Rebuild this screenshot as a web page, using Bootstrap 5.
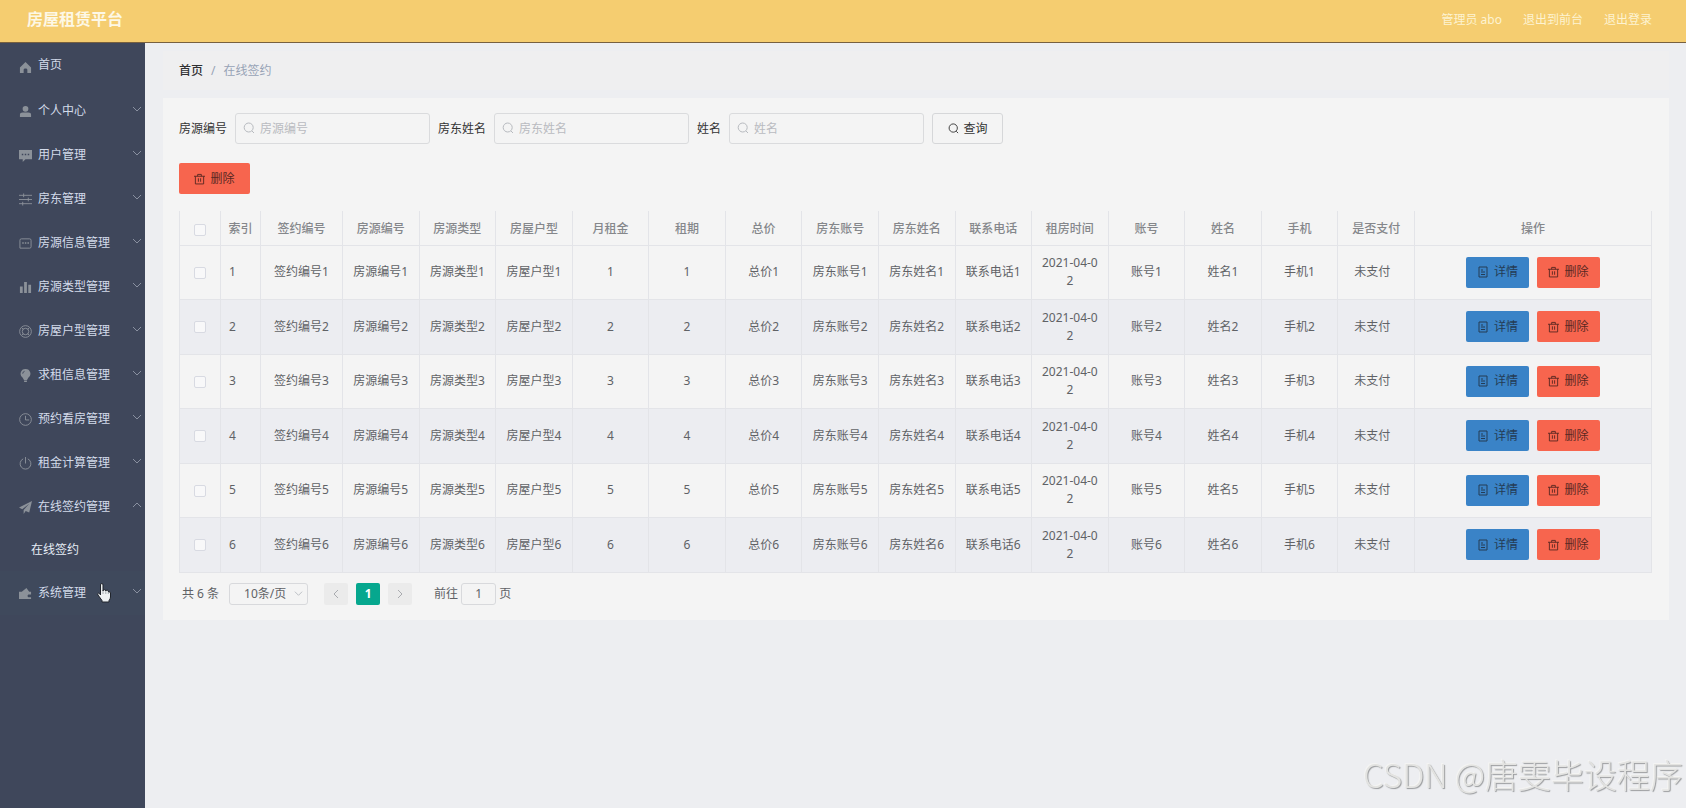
<!DOCTYPE html>
<html lang="zh-CN">
<head>
<meta charset="utf-8">
<meta name="viewport" content="width=device-width, initial-scale=1">
<title>房屋租赁平台</title>
<link href="https://cdn.jsdelivr.net/npm/bootstrap@5.3.0/dist/css/bootstrap.min.css" rel="stylesheet">
<style>
body { font: 12px/18px "Noto Sans", "Noto Sans CJK SC", sans-serif; background: #edeef1; color: #606266; }
svg { display: block; fill: none; stroke: currentColor; flex: none; }
a { text-decoration: none; }
.topbar { height: 43px; background: #f5cd70; border-bottom: 1px solid #77603f; padding: 0 34px 5px 27px; }
.brand { font-size: 16px; font-weight: 700; color: #fdf8e6; }
.toplinks { gap: 21px; padding-top: 2px; }
.toplinks a { color: #fdf3d2; }
.sidebar { width: 145px; background: #3f475b; flex: none; }
.side-link { height: 44px; padding: 0 3px 0 19px; color: #d3dbea; }
.side-link > svg:first-child { color: #8b9199; margin-right: 6px; }
.side-link .chev { color: #8990a0; margin: 0 0 4px auto; }
.side-link.home { height: 46px; padding-bottom: 2px; }
.side-link.hovered { background: #3f495c; }
.side-sub { height: 42px; padding-left: 31px; color: #e6edf6; }
.pointer { left: 97px; top: 12px; }
.content-area { padding: 8px 17px 0 18px; min-width: 0; }
.crumbs { height: 39px; padding: 0 16px; background: #efeff0; gap: 8px; margin-bottom: 8px; }
.crumbs a { color: #303133; font-weight: 500; }
.crumbs span { color: #97a3b6; }
.panel { background: #f4f4f4; padding: 15px 17px 15px 16px; }
.searchbar { gap: 8px; color: #333; margin-bottom: 19px; }
.field { width: 195px; }
.field svg { left: 8px; top: 9px; color: #b7babf; }
.field .form-control { height: 31px; padding: 0 8px 0 24px; font-size: 12px; line-height: 18px; background: transparent; border: 1px solid #dadbdd; border-radius: 3px; }
.field .form-control::placeholder { color: #b9bbc0; }
.act { --bs-btn-padding-x: 12px; --bs-btn-padding-y: 0px; --bs-btn-font-size: 12px; --bs-btn-border-radius: 2px; --bs-btn-line-height: 18px; height: 31px; gap: 5px; }
.act-wide { width: 71px; }
.act-row { width: 63px; padding: 0; }
.act-find { --bs-btn-border-color: #d6d7d9; --bs-btn-color: #333; --bs-btn-border-radius: 3px; }
.act-del { --bs-btn-bg: #f7654e; --bs-btn-color: #5a2822; --bs-btn-hover-bg: #f5573e; }
.act-info { --bs-btn-bg: #3a83c7; --bs-btn-color: #243c55; --bs-btn-hover-bg: #3279bd; }
.grid-table { table-layout: fixed; border-collapse: collapse; width: 100%; margin: 17px 0 10px; text-align: center; }
.grid-table th, .grid-table td { border: 1px solid #e3e4e8; padding: 0 8px; word-break: break-all; vertical-align: middle; }
.grid-table th { height: 34px; padding: 2px 4px 0; border-top: 0; font-weight: 500; color: #85878b; }
.grid-table td { height: 54px; }
.grid-table tbody tr:nth-child(even) { background: #ecedf1; }
.grid-table tbody tr:nth-child(even) td { height: 55px; }
.grid-table td:nth-child(2) { text-align: left; }
.grid-table td:nth-child(17) { padding-right: 16px; }
.tick { float: none; width: 12px; height: 12px; margin: 0; border: 1px solid #d8dae2; border-radius: 2px !important; background: #f8f8f9; vertical-align: middle; }
.c-tick { width: 41px; }
.c-idx { width: 40px; }
.c-sign { width: 82px; }
.c-ops { width: 237px; }
.pager { padding-left: 3px; color: #606266; }
.pager select, .pager input { height: 22px; border: 1px solid #d8d9dc; border-radius: 3px; background: transparent; color: #606266; text-align: center; padding: 0; outline: 0; }
.pager select { appearance: none; width: 79px; padding: 0 16px 0 14px; text-align: left; }
.pager input { width: 35px; margin: 0 3px; }
.size-box { margin: 0 16px 0 10px; }
.size-box svg { right: 5px; top: 6px; color: #b7babf; }
.pg { width: 24px; height: 22px; border: 0; border-radius: 2px; background: #ebebeb; color: #a9abaf; padding: 0; margin-right: 8px; }
.pg.current { background: #06a78e; color: #fff; font-weight: 700; }
.goto { margin-left: 14px; }
.stamp { right: 3px; bottom: 10px; font: 33px/48px "Noto Sans CJK SC", sans-serif; font-weight: 300; color: #e3e3e1; text-shadow: 1px 1px 1px #999b9d, -1px -1px 0 #f4f4f3; pointer-events: none; white-space: nowrap; }
</style>
</head>
<body>
<svg width="0" height="0" class="position-absolute" aria-hidden="true">
  <symbol id="i-search" viewBox="0 0 12 12"><circle cx="5.7" cy="5.5" r="4.5"/><path d="M9 9l2 2"/></symbol>
  <symbol id="i-trash" viewBox="0 0 12 12"><path d="M0 3h12M4 3V1h4v2M1.500 3v8.400h9V3M4.800 5.200v3.800M7.200 5.200v3.800"/></symbol>
  <symbol id="i-doc" viewBox="0 0 12 12"><path d="M2 1h8v10H2zM4 4h2M4 6h4M4 8.500h4"/></symbol>
  <symbol id="i-down" viewBox="0 0 10 10"><path d="M1 3l4 4 4-4"/></symbol>
  <symbol id="i-up" viewBox="0 0 10 10"><path d="M1 7l4-4 4 4"/></symbol>
</svg>

<header class="topbar d-flex align-items-center justify-content-between">
  <div class="brand">房屋租赁平台</div>
  <nav class="toplinks d-flex"><a href="#">管理员 abo</a><a href="#">退出到前台</a><a href="#">退出登录</a></nav>
</header>

<div class="d-flex align-items-stretch" style="min-height:calc(100vh - 43px)">
  <nav class="sidebar" aria-label="菜单">
    <a href="#" class="side-link home d-flex align-items-center"><svg class="mt-1" width="13" height="13" viewBox="0 0 14 14"><path d="M7 1L1 7v6h4V9.500c0-2 4-2 4 0V13h4V7z" fill="currentColor" stroke="none"/></svg>首页</a>
    <a href="#" class="side-link d-flex align-items-center"><svg width="13" height="13" viewBox="0 0 14 14" ><path d="M1 13v-2.500Q1 8 4 8h6q3 0 3 2.500V13zM7 1a3 3 0 0 1 0 6.200A3 3 0 0 1 7 1z" fill="currentColor" stroke="none"/></svg>个人中心<svg class="chev" width="10" height="10"><use href="#i-down"/></svg></a>
    <a href="#" class="side-link d-flex align-items-center"><svg width="13" height="13" viewBox="0 0 14 14"><path d="M0 1h14v10H7l-3 3v-3H0zM3 5.200v1.600h1.600V5.200zM6.200 5.200v1.600h1.600V5.200zM9.400 5.200v1.600H11V5.200z" fill="currentColor" fill-rule="evenodd" stroke="none"/></svg>用户管理<svg class="chev" width="10" height="10"><use href="#i-down"/></svg></a>
    <a href="#" class="side-link d-flex align-items-center"><svg width="13" height="13" viewBox="0 0 14 14"><path d="M0 2.500h14M0 7h14M0 11.500h14M5 .5v4M10 5v4M4 9.500v4"/></svg>房东管理<svg class="chev" width="10" height="10"><use href="#i-down"/></svg></a>
    <a href="#" class="side-link d-flex align-items-center"><svg width="13" height="13" viewBox="0 0 14 14"><path d="M2.500 2h9q1.500 0 1.500 1.500v7Q13 12 11.500 12H1V3.500Q1 2 2.500 2z"/><path d="M3.500 6.500h1.600M6.300 6.500h1.600M9.100 6.500h1.600" stroke-width="1.600"/></svg>房源信息管理<svg class="chev" width="10" height="10"><use href="#i-down"/></svg></a>
    <a href="#" class="side-link d-flex align-items-center"><svg width="13" height="13" viewBox="0 0 14 14"><path d="M1 6h3v7H1zM5.500 1h3v12h-3zM10 4h3v9h-3z" fill="currentColor" stroke="none"/></svg>房源类型管理<svg class="chev" width="10" height="10"><use href="#i-down"/></svg></a>
    <a href="#" class="side-link d-flex align-items-center"><svg width="13" height="13" viewBox="0 0 14 14"><circle cx="7" cy="7" r="6.300"/><circle cx="7" cy="7" r="3.500"/><path d="M3 3l1.700 1.700M11 3L9.300 4.700M3 11l1.700-1.700M11 11L9.300 9.300"/></svg>房屋户型管理<svg class="chev" width="10" height="10"><use href="#i-down"/></svg></a>
    <a href="#" class="side-link d-flex align-items-center"><svg width="13" height="13" viewBox="0 0 14 14"><path d="M7 0a5.200 5.200 0 0 1 3 9.500L8.500 12h-3L4 9.500A5.200 5.200 0 0 1 7 0zM5.500 12.700h3V14h-3z" fill="currentColor" stroke="none"/><path d="M4 5q0-2 2-2.500" stroke="#3f475b"/></svg>求租信息管理<svg class="chev" width="10" height="10"><use href="#i-down"/></svg></a>
    <a href="#" class="side-link d-flex align-items-center"><svg width="13" height="13" viewBox="0 0 14 14"><circle cx="7" cy="7" r="6.300"/><path d="M7 3v4.500h4"/></svg>预约看房管理<svg class="chev" width="10" height="10"><use href="#i-down"/></svg></a>
    <a href="#" class="side-link d-flex align-items-center"><svg width="13" height="13" viewBox="0 0 14 14"><path d="M4.500 2a5.800 5.800 0 1 0 5 0M7 0v7"/></svg>租金计算管理<svg class="chev" width="10" height="10"><use href="#i-down"/></svg></a>
    <a href="#" class="side-link d-flex align-items-center"><svg width="13" height="13" viewBox="0 0 14 14"><path d="M14 0L0 7l3.500 1.800L11 3 5 9.600V14l2.200-3.200L11 12.500z" fill="currentColor" stroke="none"/></svg>在线签约管理<svg class="chev" width="10" height="10"><use href="#i-up"/></svg></a>
    <a href="#" class="side-sub d-flex align-items-center">在线签约</a>
    <a href="#" class="side-link hovered d-flex align-items-center position-relative"><svg width="13" height="13" viewBox="0 0 14 14"><path d="M0 5h3L8 1l3 4h2v3h-3q-2 1.500 0 3h3v2H0z" fill="currentColor" stroke="none"/></svg>系统管理<svg class="chev" width="10" height="10"><use href="#i-down"/></svg>
      <svg class="pointer position-absolute" width="14" height="20" viewBox="0 0 14 20"><path d="M3.500 12V2q0-1.500 1.300-1.500T6 2v6q.2-1.500 1.500-1.300T8.800 8q.3-1 1.500-.8T11.500 9q2-.8 2 1v4q0 2-1.500 3.500V19H5v-1.500L1 12q-1-1.500.3-1.800T3.500 12z" fill="#eef1f3" stroke="#20242c"/><path d="M6 8v3M8.800 8v3M11.300 9v2" stroke="#8a9098" stroke-width=".7"/></svg></a>
  </nav>

  <main class="content-area flex-grow-1">
    <nav class="crumbs d-flex align-items-center" aria-label="位置"><a href="#">首页</a><span>/</span><span>在线签约</span></nav>
    <section class="panel">
      <form class="searchbar d-flex align-items-center flex-wrap">
        <label for="q1">房源编号</label>
        <div class="field position-relative"><svg class="position-absolute" width="12" height="12"><use href="#i-search"/></svg><input id="q1" class="form-control" type="text" placeholder="房源编号"></div>
        <label for="q2">房东姓名</label>
        <div class="field position-relative"><svg class="position-absolute" width="12" height="12"><use href="#i-search"/></svg><input id="q2" class="form-control" type="text" placeholder="房东姓名"></div>
        <label for="q3">姓名</label>
        <div class="field position-relative"><svg class="position-absolute" width="12" height="12"><use href="#i-search"/></svg><input id="q3" class="form-control" type="text" placeholder="姓名"></div>
        <button type="button" class="btn act act-wide act-find d-flex align-items-center justify-content-center"><svg width="11" height="11"><use href="#i-search"/></svg>查询</button>
      </form>
      <button type="button" class="btn act act-wide act-del d-flex align-items-center justify-content-center"><svg width="11" height="12"><use href="#i-trash"/></svg>删除</button>

      <table class="grid-table">
        <colgroup><col class="c-tick"><col class="c-idx"><col class="c-sign"><col span="14"><col class="c-ops"></colgroup>
        <thead><tr><th><input type="checkbox" class="tick form-check-input" aria-label="全选"></th><th>索引</th><th>签约编号</th><th>房源编号</th><th>房源类型</th><th>房屋户型</th><th>月租金</th><th>租期</th><th>总价</th><th>房东账号</th><th>房东姓名</th><th>联系电话</th><th>租房时间</th><th>账号</th><th>姓名</th><th>手机</th><th>是否支付</th><th>操作</th></tr></thead>
        <tbody id="rows"></tbody>
      </table>

      <div class="pager d-flex align-items-center">
        <span>共 6 条</span>
        <div class="size-box position-relative"><select aria-label="每页条数"><option>10条/页</option></select><svg class="position-absolute" width="9" height="9"><use href="#i-down"/></svg></div>
        <button type="button" class="pg d-flex align-items-center justify-content-center" aria-label="上一页"><svg width="8" height="10" viewBox="0 0 8 10"><path d="M6 1L2 5l4 4"/></svg></button>
        <button type="button" class="pg current">1</button>
        <button type="button" class="pg d-flex align-items-center justify-content-center" aria-label="下一页"><svg width="8" height="10" viewBox="0 0 8 10"><path d="M2 1l4 4-4 4"/></svg></button>
        <label class="goto" for="pageno">前往</label><input id="pageno" type="text" value="1"><span>页</span>
      </div>
    </section>
  </main>
</div>
<div class="stamp position-fixed">CSDN @唐雯毕设程序</div>

<script>
const names = n => ['签约编号' + n, '房源编号' + n, '房源类型' + n, '房屋户型' + n, n, n, '总价' + n, '房东账号' + n,
  '房东姓名' + n, '联系电话' + n, '2021-04-02', '账号' + n, '姓名' + n, '手机' + n, '未支付'];
document.getElementById('rows').innerHTML = [1, 2, 3, 4, 5, 6].map(n => `<tr>
  <td><input type="checkbox" class="tick form-check-input" aria-label="选择 ${n}"></td><td>${n}</td>
  ${names(n).map(t => `<td>${t}</td>`).join('')}
  <td><div class="d-flex justify-content-center gap-2">
    <button type="button" class="btn act act-row act-info d-flex align-items-center justify-content-center"><svg width="12" height="12"><use href="#i-doc"/></svg>详情</button>
    <button type="button" class="btn act act-row act-del d-flex align-items-center justify-content-center"><svg width="11" height="12"><use href="#i-trash"/></svg>删除</button>
  </div></td></tr>`).join('');
</script>
<script src="https://cdn.jsdelivr.net/npm/bootstrap@5.3.0/dist/js/bootstrap.bundle.min.js"></script>
</body>
</html>
